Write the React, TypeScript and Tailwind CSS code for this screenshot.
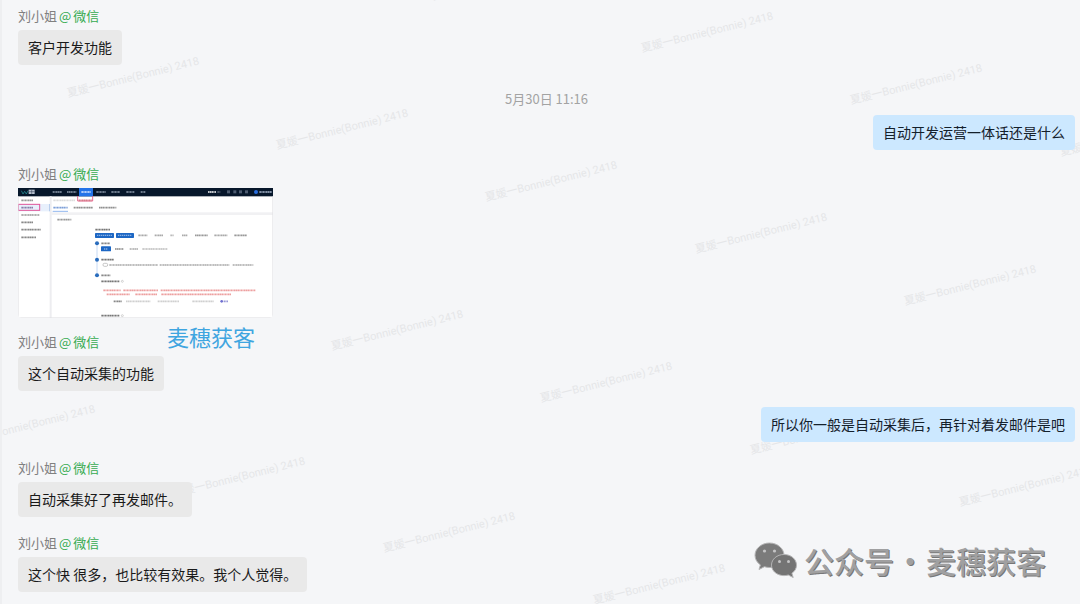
import React from 'react';
import { clsx } from 'clsx';

type Message = {
  id: number;
  side: 'left' | 'right';
  text?: string;
  spacing: string;
};

const earlier: Message[] = [{ id: 1, side: 'left', text: '客户开发功能', spacing: '' }];

const recent: Message[] = [
  { id: 2, side: 'right', text: '自动开发运营一体话还是什么', spacing: 'mt-1.5' },
  { id: 3, side: 'left', spacing: 'mt-3.5' },
  { id: 4, side: 'left', text: '这个自动采集的功能', spacing: 'mt-3.5' },
  { id: 5, side: 'right', text: '所以你一般是自动采集后，再针对着发邮件是吧', spacing: 'mt-4' },
  { id: 6, side: 'left', text: '自动采集好了再发邮件。', spacing: 'mt-4' },
  { id: 7, side: 'left', text: '这个快 很多，也比较有效果。我个人觉得。', spacing: 'mt-4' },
];

// Watermarks repeat on a slanted grid
const watermarks = [
  [434, 1],
  [643, 53],
  [852, 105],
  [1062, 157],
  [69, 98],
  [278, 150],
  [487, 202],
  [697, 254],
  [906, 306],
  [333, 351],
  [542, 403],
  [752, 455],
  [961, 507],
  [-35, 446],
  [175, 498],
  [385, 553],
  [595, 605],
];

// x, y, width, colour of each unreadable text run in the thumbnail
const runs: [number, number, number, string][] = [
  [104, 12, 28, '#8d9aac'],
  [147, 12, 28, '#8d9aac'],
  [190, 12, 28, '#dbe8ff'],
  [235, 12, 28, '#8d9aac'],
  [280, 12, 26, '#8d9aac'],
  [325, 12, 24, '#8d9aac'],
  [368, 12, 14, '#8d9aac'],
  [570, 12, 24, '#ffffff'],
  [598, 12, 10, '#5c6878'],
  [724, 12, 38, '#a9b6cc'],
  [10, 37, 36, '#999999'],
  [10, 59, 36, '#8a7fa8'],
  [10, 81, 54, '#999999'],
  [10, 103, 36, '#888888'],
  [10, 125, 58, '#888888'],
  [10, 148, 44, '#888888'],
  [106, 37, 66, '#dddddd'],
  [182, 37, 40, '#d77a8b'],
  [106, 59, 43, '#7d9fd8'],
  [167, 59, 58, '#909090'],
  [243, 59, 52, '#909090'],
  [118, 95, 42, '#999999'],
  [232, 125, 44, '#777777'],
  [361, 142, 27, '#aaaaaa'],
  [410, 142, 26, '#aaaaaa'],
  [457, 142, 11, '#bbbbbb'],
  [492, 142, 17, '#aaaaaa'],
  [531, 142, 38, '#999999'],
  [589, 142, 39, '#aaaaaa'],
  [649, 142, 38, '#999999'],
  [250, 166, 26, '#888888'],
  [291, 183, 25, '#888888'],
  [335, 183, 25, '#aaaaaa'],
  [373, 183, 75, '#bdbdbd'],
  [250, 215, 38, '#777777'],
  [274, 231, 146, '#aaaaaa'],
  [425, 231, 210, '#aaaaaa'],
  [644, 231, 62, '#aaaaaa'],
  [250, 262, 27, '#888888'],
  [250, 280, 54, '#777777'],
  [256, 307, 52, '#eda0a0'],
  [316, 307, 104, '#eda0a0'],
  [428, 307, 284, '#eda0a0'],
  [266, 319, 70, '#eda0a0'],
  [352, 319, 66, '#eda0a0'],
  [430, 319, 210, '#eda0a0'],
  [287, 340, 24, '#888888'],
  [324, 340, 73, '#d0d0d0'],
  [419, 340, 64, '#d0d0d0'],
  [523, 340, 64, '#d0d0d0'],
  [617, 340, 13, '#9a9ad8'],
  [250, 383, 54, '#777777'],
];

function Thumbnail() {
  return (
    <svg viewBox="0 0 765 390" className="block h-auto w-[255px] rounded-b-sm" aria-hidden="true">
      <rect width="765" height="390" fill="#ffffff" />
      <rect width="765" height="25" fill="#07172b" />
      <path d="M10 8l5 10 5-8 5 8 5-10" fill="none" stroke="#2a9fa3" strokeWidth="2" />
      <rect x="32" y="5" width="18" height="13" fill="#b8c2d0" />
      <path d="M41 5v13M32 11h18" stroke="#2c3b50" strokeWidth="1.5" />
      <rect x="183" width="42" height="25" fill="#2473e8" />
      {[627, 646, 663, 681].map((x) => (
        <rect key={x} x={x} y="7" width="9" height="9" fill="#4d5b70" />
      ))}
      <circle cx="714" cy="12" r="6" fill="#286cdd" />

      {/* Side menu */}
      <rect y="48" width="95" height="22" fill="#e8f0fc" />
      <path d="M95 48v22" stroke="#5d91dd" strokeWidth="2" />
      <path d="M98 25v365" stroke="#ededf0" strokeWidth="6" />
      <rect x="1" y="49" width="64" height="18" fill="none" stroke="#e0569a" strokeWidth="3" />
      <path d="M179 24v15h45V24" fill="none" stroke="#e0527e" strokeWidth="2.5" />

      {/* Tabs and card */}
      <path d="M104 70h46" stroke="#5b93e6" strokeWidth="2" />
      <rect x="98" y="73" width="667" height="8" fill="#f1f1f3" />

      {/* Step form */}
      <path d="M237 166v96" stroke="#a9c5ee" strokeWidth="2" />
      {[166, 215, 262].map((y) => (
        <circle key={y} cx="237" cy={y} r="6" fill="#2a6dbd" />
      ))}
      <rect x="231" y="135" width="57" height="15" rx="2" fill="#1d67c4" />
      <rect x="294" y="135" width="54" height="15" rx="2" fill="#1d67c4" />
      <rect x="249" y="175" width="30" height="15" rx="2" fill="#1d67c4" />
      <path d="M237 142h45M300 142h42M258 183h12" stroke="#8ab0e2" strokeWidth="4" strokeDasharray="4 2" />
      <rect x="255" y="226" width="14" height="9" rx="4" fill="none" stroke="#aaaaaa" strokeWidth="2" />
      <circle cx="313" cy="280" r="3" fill="none" stroke="#888888" />
      <circle cx="313" cy="383" r="3" fill="none" stroke="#888888" />
      <circle cx="611" cy="340" r="4" fill="#6f6fd0" />

      {runs.map(([x, y, width, color]) => (
        <path
          key={`${x}-${y}`}
          d={`M${x} ${y}h${width}`}
          stroke={color}
          strokeWidth="5"
          strokeDasharray="5 1 3 1"
        />
      ))}
      <path d="M1 25v364h763V25" fill="none" stroke="#dedee2" strokeWidth="2" />
    </svg>
  );
}

function Sender() {
  return (
    <p className="mb-1 flex gap-0.5 text-[13px] leading-5 text-[#808080]">
      <span>刘小姐</span>
      <span className="text-[#36ab50]">@</span>
      <span className="text-[#36ab50]">微信</span>
    </p>
  );
}

function MessageRow({ message }: { message: Message }) {
  const mine = message.side === 'right';

  return (
    <li className={clsx('flex flex-col', mine ? 'items-end' : 'items-start', message.spacing)}>
      {!mine && <Sender />}
      {message.text ? (
        <p
          className={clsx(
            'rounded px-2.5 py-[7px] text-sm leading-[21px]',
            mine ? 'bg-[#cce8ff] text-[#14202b]' : 'bg-[#e9e9e9] text-[#1a1a1a]'
          )}
        >
          {message.text}
        </p>
      ) : (
        <div className="relative">
          <Thumbnail />
          <span className="absolute top-full right-[18px] text-[22px] leading-9 whitespace-nowrap text-[#3fa5e0]">
            麦穗获客
          </span>
        </div>
      )}
    </li>
  );
}

function WeChatMark() {
  return (
    <svg viewBox="0 0 44 36" className="h-9 w-11" aria-hidden="true">
      <path
        d="M15.500 1C7.500 1 1 6.500 1 13.300c0 3.900 2.100 7.300 5.400 9.600L5 27.500l5.400-2.800c1.600.5 3.300.8 5.100.8 8 0 14.500-5.500 14.500-12.200S23.500 1 15.500 1z"
        fill="#7b7b7b"
        stroke="#b5b5b6"
      />
      <path
        d="M30 12.500c-7 0-12.500 4.700-12.500 10.600S23 33.600 30 33.600c1.500 0 3-.2 4.300-.6l4.900 2.500-1.300-4.200c2.800-1.900 4.600-4.800 4.600-8.200 0-5.900-5.500-10.600-12.500-10.600z"
        fill="#747474"
        stroke="#b5b5b6"
      />
      <g fill="#c4c4c5">
        <circle cx="10.500" cy="9" r="1.600" />
        <circle cx="20.500" cy="9" r="1.600" />
        <circle cx="25.500" cy="19.500" r="1.500" />
        <circle cx="34.500" cy="19.500" r="1.500" />
      </g>
    </svg>
  );
}

export default function App() {
  return (
    <main className="relative min-h-screen overflow-hidden border-l-2 border-[#eeeff1] bg-[#f5f6f8] font-['Noto_Sans_CJK_SC',sans-serif]">
      {/* Watermark layer */}
      <div
        className="pointer-events-none absolute inset-0 font-['Roboto','Noto_Sans_CJK_SC',sans-serif]"
        aria-hidden="true"
      >
        {watermarks.map(([x, y]) => (
          <span
            key={`${x}-${y}`}
            className="absolute origin-bottom-left -rotate-14 text-[11px] leading-3 whitespace-nowrap text-[#e5e6e8]"
            style={{ left: x - 2, top: y - 10 }}
          >
            夏媛一Bonnie(Bonnie) 2418
          </span>
        ))}
      </div>

      <section className="relative pt-1.5 pr-[5px] pb-3 pl-4">
        <ol>
          {earlier.map((message) => (
            <MessageRow key={message.id} message={message} />
          ))}
        </ol>
        <time className="mt-6 block text-center text-[13px] leading-5 text-[#a3a3a3]">5月30日 11:16</time>
        <ol>
          {recent.map((message) => (
            <MessageRow key={message.id} message={message} />
          ))}
        </ol>
      </section>

      {/* Account signature */}
      <div className="absolute right-[34px] bottom-6 flex items-center gap-1.5 text-[30px] leading-10 font-medium text-[#a0a0a1] [text-shadow:1px_1px_0_#777777]">
        <WeChatMark />
        <p className="flex">
          <span>公众号</span>
          <span className="w-8 text-center">·</span>
          <span>麦穗获客</span>
        </p>
      </div>
    </main>
  );
}
